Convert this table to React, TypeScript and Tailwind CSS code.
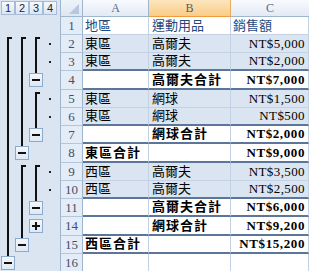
import React from "react";

type Mark = "" | "start" | "line" | "minus" | "plus" | "dot";
type Kind = "head" | "detail" | "sub" | "total" | "empty";

interface Row {
  n: string;
  tall?: boolean;
  kind: Kind;
  a?: string;
  b?: string;
  c?: string;
  marks: Mark[];
}

const rows: Row[] = [
  { n: "1", kind: "head", a: "地區", b: "運動用品", c: "銷售額", marks: ["", "", "", ""] },
  { n: "2", kind: "detail", a: "東區", b: "高爾夫", c: "NT$5,000", marks: ["start", "start", "start", "dot"] },
  { n: "3", kind: "detail", a: "東區", b: "高爾夫", c: "NT$2,000", marks: ["line", "line", "line", "dot"] },
  { n: "4", tall: true, kind: "sub", b: "高爾夫合計", c: "NT$7,000", marks: ["line", "line", "minus", ""] },
  { n: "5", kind: "detail", a: "東區", b: "網球", c: "NT$1,500", marks: ["line", "line", "start", "dot"] },
  { n: "6", kind: "detail", a: "東區", b: "網球", c: "NT$500", marks: ["line", "line", "line", "dot"] },
  { n: "7", kind: "sub", b: "網球合計", c: "NT$2,000", marks: ["line", "line", "minus", ""] },
  { n: "8", tall: true, kind: "total", a: "東區合計", c: "NT$9,000", marks: ["line", "minus", "", ""] },
  { n: "9", kind: "detail", a: "西區", b: "高爾夫", c: "NT$3,500", marks: ["line", "start", "start", "dot"] },
  { n: "10", kind: "detail", a: "西區", b: "高爾夫", c: "NT$2,500", marks: ["line", "line", "line", "dot"] },
  { n: "11", kind: "sub", b: "高爾夫合計", c: "NT$6,000", marks: ["line", "line", "minus", ""] },
  { n: "14", tall: true, kind: "sub", b: "網球合計", c: "NT$9,200", marks: ["line", "line", "plus", ""] },
  { n: "15", kind: "total", a: "西區合計", c: "NT$15,200", marks: ["line", "minus", "", ""] },
  { n: "16", kind: "empty", marks: ["minus", "", "", ""] },
];

const cjk = "font-['Liberation_Serif','Noto_Sans_CJK_TC',serif]";
const num = "font-['Liberation_Serif',serif]";

const isStrong = (k?: Kind) => k === "sub" || k === "total";

function OutlineButton({ plus }: { plus?: boolean }) {
  return (
    <div className="w-[14px] h-[14px] shrink-0 border border-[#8eaacb] bg-gradient-to-b from-[#f3f7fc] to-[#dfe8f4] flex items-center justify-center">
      <svg width="8" height="8" viewBox="0 0 8 8">
        <rect x="0" y="3" width="8" height="2" fill="#111" />
        {plus && <rect x="3" y="0" width="2" height="8" fill="#111" />}
      </svg>
    </div>
  );
}

function MarkCell({ m }: { m: Mark }) {
  if (m === "start")
    return (
      <div className="w-[14px] h-full flex pl-[6px] pt-[2px]">
        <div className="w-[5px] h-full border-l-2 border-t-2 border-[#111]" />
      </div>
    );
  if (m === "line")
    return (
      <div className="w-[14px] h-full flex pl-[6px]">
        <div className="w-[2px] h-full bg-[#111]" />
      </div>
    );
  if (m === "minus")
    return (
      <div className="w-[14px] h-full flex flex-col">
        <div className="ml-[6px] w-[2px] h-[2px] bg-[#111]" />
        <OutlineButton />
      </div>
    );
  if (m === "plus")
    return (
      <div className="w-[14px] h-full flex flex-col pt-[2px]">
        <OutlineButton plus />
      </div>
    );
  if (m === "dot")
    return (
      <div className="w-[14px] h-full flex items-center pl-[6px]">
        <div className="w-[2px] h-[2px] bg-[#222]" />
      </div>
    );
  return <div className="w-[14px] h-full" />;
}

export default function App() {
  return (
    <div className="w-[309px] h-[271px] overflow-hidden bg-white flex flex-col">
      {/* column header row */}
      <div className="flex h-[17px] shrink-0">
        <div className="w-[61px] h-full flex pl-[1px] pt-[1px] bg-[#dbe5f1] border-r border-[#9eb6ce]">
          {["1", "2", "3", "4"].map((l) => (
            <div
              key={l}
              className="w-[14px] h-[14px] border border-[#a7bbd4] bg-gradient-to-b from-[#f7f9fd] to-[#dce5f2] flex items-center justify-center text-[11px] leading-none text-[#1c2838] font-['Liberation_Sans',sans-serif]"
            >
              {l}
            </div>
          ))}
        </div>
        <div className="w-[22px] h-full bg-gradient-to-b from-[#eef3fa] to-[#dde6f2] border-r border-b border-[#9eb6ce] flex items-end justify-end pr-[3px] pb-[2px]">
          <svg width="10" height="10" viewBox="0 0 10 10">
            <polygon points="10,0 10,10 0,10" fill="#b8c8dc" />
          </svg>
        </div>
        <div className={`w-[66px] h-full bg-gradient-to-b from-[#f8fafd] to-[#e3eaf4] border-r border-b border-[#9eb6ce] flex items-center justify-center text-[12px] text-[#5a6d88] ${num}`}>
          A
        </div>
        <div className={`w-[82px] h-full bg-gradient-to-b from-[#fde6bd] to-[#f8cc86] border-r border-b border-[#e8ae5c] border-b-[#f29b3c] flex items-center justify-center text-[12px] text-[#5a5a60] ${num}`}>
          B
        </div>
        <div className={`w-[78px] h-full bg-gradient-to-b from-[#f8fafd] to-[#e3eaf4] border-b border-[#9eb6ce] flex items-center justify-center text-[12px] text-[#5a6d88] ${num}`}>
          C
        </div>
      </div>

      {rows.map((r, i) => {
        const next = rows[i + 1];
        const dark = isStrong(r.kind) || isStrong(next?.kind);
        const bg = r.kind === "detail" ? "bg-[#dbe5f1]" : "bg-white";
        const bb = dark ? "border-b-2 border-b-[#5b7699]" : "border-b border-b-[#c3d1e4]";
        const textColor = r.kind === "head" ? "text-[#1f497d]" : "text-black";
        const boldA = r.kind === "total" ? "font-bold tracking-[1px]" : "";
        const boldB = r.kind === "sub" ? "font-bold tracking-[1px]" : "";
        const boldC = isStrong(r.kind) ? "font-bold tracking-[0.6px]" : "tracking-[0.4px]";
        return (
          <div key={r.n} className={`flex shrink-0 ${r.tall ? "h-[19px]" : "h-[18px]"}`}>
            <div className="w-[61px] h-full flex pl-[1px] bg-[#dbe5f1] border-r border-[#9eb6ce]">
              {r.marks.map((m, j) => (
                <MarkCell key={j} m={m} />
              ))}
            </div>
            <div className={`w-[22px] h-full bg-[#e4ecf7] border-r border-b border-r-[#9eb6ce] border-b-[#b4c6dc] flex items-center justify-center text-[13px] text-[#3f5068] ${num}`}>
              {r.n}
            </div>
            <div className={`w-[66px] h-full ${bg} ${bb} border-r border-r-[#c3d1e4] flex items-center pl-[2px] text-[13px] ${textColor} ${boldA} ${cjk}`}>
              {r.a}
            </div>
            <div className={`w-[82px] h-full ${bg} ${bb} border-r border-r-[#c3d1e4] flex items-center pl-[3px] text-[13px] ${textColor} ${boldB} ${cjk}`}>
              {r.b}
            </div>
            <div
              className={`w-[78px] h-full ${bg} ${bb} border-r border-r-[#c3d1e4] flex items-center pr-[3px] text-[13px] ${textColor} ${
                r.kind === "head" ? `justify-start pl-[2px] ${cjk}` : `justify-end ${boldC} ${num}`
              }`}
            >
              {r.c}
            </div>
          </div>
        );
      })}
    </div>
  );
}
